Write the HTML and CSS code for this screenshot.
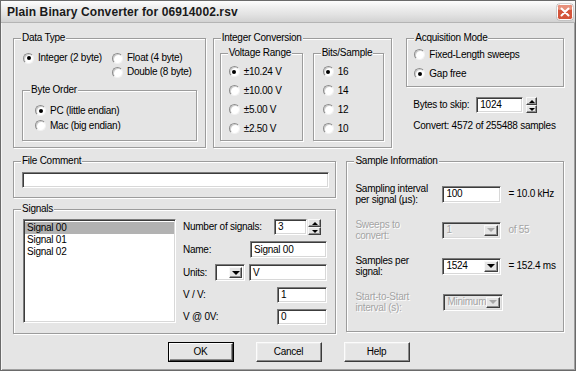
FILE: index.html
```html
<!DOCTYPE html>
<html>
<head>
<meta charset="utf-8">
<link rel="stylesheet" href="styles.css">
</head>
<body>
<div class="window">
  <div class="titlebar">
    <span class="title">Plain Binary Converter for 06914002.rsv</span>
    <svg class="close" width="18" height="18" viewBox="0 0 18 18">
      <rect x="0.5" y="0.5" width="17" height="17" rx="3" fill="#b0b0b0"/>
      <rect x="1.5" y="1.5" width="15" height="15" rx="2" fill="#d4553b" stroke="#ffffff" stroke-width="1"/>
      <rect x="2" y="2" width="14" height="5" rx="1.5" fill="#e8917c"/>
      <path d="M5.5 5.5 L12.5 12.5 M12.5 5.5 L5.5 12.5" stroke="#ffffff" stroke-width="2" stroke-linecap="round"/>
    </svg>
  </div>
  <div class="client">
    <div class="top-row">
      <fieldset class="group g-datatype">
        <legend>Data Type</legend>
        <div class="dt-grid">
          <div class="radio"><span class="rb on"></span>Integer (2 byte)</div>
          <div class="radio"><span class="rb"></span>Float (4 byte)</div>
          <div></div>
          <div class="radio"><span class="rb"></span>Double (8 byte)</div>
        </div>
        <fieldset class="group g-byteorder">
          <legend>Byte Order</legend>
          <div class="bo-list">
            <div class="radio"><span class="rb on"></span>PC (little endian)</div>
            <div class="radio"><span class="rb"></span>Mac (big endian)</div>
          </div>
        </fieldset>
      </fieldset>

      <fieldset class="group g-intconv">
        <legend>Integer Conversion</legend>
        <div class="ic-row">
          <fieldset class="group g-volt">
            <legend>Voltage Range</legend>
            <div class="volt-list">
              <div class="radio"><span class="rb on"></span>±10.24 V</div>
              <div class="radio"><span class="rb"></span>±10.00 V</div>
              <div class="radio"><span class="rb"></span>±5.00 V</div>
              <div class="radio"><span class="rb"></span>±2.50 V</div>
            </div>
          </fieldset>
          <fieldset class="group g-bits">
            <legend>Bits/Sample</legend>
            <div class="bits-list">
              <div class="radio"><span class="rb on"></span>16</div>
              <div class="radio"><span class="rb"></span>14</div>
              <div class="radio"><span class="rb"></span>12</div>
              <div class="radio"><span class="rb"></span>10</div>
            </div>
          </fieldset>
        </div>
      </fieldset>

      <div class="right-col">
        <fieldset class="group g-acq">
          <legend>Acquisition Mode</legend>
          <div class="acq-list">
            <div class="radio"><span class="rb"></span>Fixed-Length sweeps</div>
            <div class="radio"><span class="rb on"></span>Gap free</div>
          </div>
        </fieldset>
        <div class="skip-row">
          <span class="skip-label">Bytes to skip:</span>
          <span class="field skip-input">1024</span>
          <span class="spin"><span class="spin-btn"><span class="tri-up"></span></span><span class="spin-btn"><span class="tri-down"></span></span></span>
        </div>
        <div class="convert">Convert: 4572 of 255488 samples</div>
      </div>
    </div>

    <div class="mid-row">
      <div class="left-col">
        <fieldset class="group g-comment">
          <legend>File Comment</legend>
          <div class="field comment-input"></div>
        </fieldset>
        <fieldset class="group g-signals">
          <legend>Signals</legend>
          <div class="sig-body">
            <div class="listbox">
              <div class="lb-item sel">Signal 00</div>
              <div class="lb-item">Signal 01</div>
              <div class="lb-item">Signal 02</div>
            </div>
            <div class="sig-form">
              <div class="frow">
                <span class="flabel w91">Number of signals:</span>
                <span class="field w33">3</span>
                <span class="spin spin-sig"><span class="spin-btn"><span class="tri-up"></span></span><span class="spin-btn"><span class="tri-down"></span></span></span>
              </div>
              <div class="frow">
                <span class="flabel w67">Name:</span>
                <span class="field w77">Signal 00</span>
              </div>
              <div class="frow">
                <span class="flabel w32">Units:</span>
                <span class="field combo w30"><span class="combo-text"></span><span class="combo-btn"><span class="tri-down big"></span></span></span>
                <span class="field w78 units-input">V</span>
              </div>
              <div class="frow">
                <span class="flabel w94">V / V:</span>
                <span class="field w50">1</span>
              </div>
              <div class="frow">
                <span class="flabel w94">V @ 0V:</span>
                <span class="field w50">0</span>
              </div>
            </div>
          </div>
        </fieldset>
      </div>

      <fieldset class="group g-sample">
        <legend>Sample Information</legend>
        <div class="si-grid">
          <span class="si-label">Sampling interval<br>per signal (µs):</span>
          <span class="field si-field">100</span>
          <span class="si-after">= 10.0 kHz</span>

          <span class="si-label disabled">Sweeps to<br>convert:</span>
          <span class="field combo si-field dis"><span class="combo-text">1</span><span class="combo-btn"><span class="tri-down big"></span></span></span>
          <span class="si-after disabled">of 55</span>

          <span class="si-label">Samples per<br>signal:</span>
          <span class="field combo si-field"><span class="combo-text">1524</span><span class="combo-btn"><span class="tri-down big"></span></span></span>
          <span class="si-after">= 152.4 ms</span>

          <span class="si-label disabled">Start-to-Start<br>interval (s):</span>
          <span class="field combo si-field dis wide"><span class="combo-text">Minimum</span><span class="combo-btn"><span class="tri-down big"></span></span></span>
          <span></span>
        </div>
      </fieldset>
    </div>

    <div class="btn-row">
      <span class="btn default"><span class="btn-in">OK</span></span>
      <span class="btn"><span class="btn-in">Cancel</span></span>
      <span class="btn"><span class="btn-in">Help</span></span>
    </div>
  </div>
</div>
</body>
</html>
```

FILE: styles.css
```css
* { box-sizing: border-box; }
html, body { margin: 0; padding: 0; }
body {
  font: 10px/12px "Liberation Sans", Arial, sans-serif;
  letter-spacing: -0.25px;
  color: #000;
  background: #e5e5e5;
}

.window {
  width: 576px;
  height: 371px;
  border: 1px solid #6a6a6a;
  padding: 0 2px 2px;
  background: #e5e5e5;
  display: flex;
  flex-direction: column;
  box-shadow: inset 1px 0 0 #f4f4f4, inset -1px -1px 0 #a0a0a0;
}

.titlebar {
  height: 22px;
  margin: 0 -2px;
  padding: 0 1px 0 6px;
  display: flex;
  align-items: center;
  justify-content: space-between;
  background: linear-gradient(to bottom, #fdfdfd 0%, #efefef 30%, #e2e2e2 65%, #d2d2d2 100%);
  border-bottom: 1px solid #b4b4b4;
  flex: none;
}
.title {
  font: bold 12px/14px "Liberation Sans", Arial, sans-serif;
  letter-spacing: 0.1px;
  color: #1a1a1a;
}
.close { display: block; flex: none; }

.client {
  flex: 1;
  padding: 9px 9px 0 10px;
}

/* group boxes */
.group {
  margin: 0;
  padding: 0;
  min-width: 0;
  border: 1px solid #9c9c9c;
  box-shadow: inset 1px 1px 0 #fff, 1px 1px 0 #fff;
}
.group > legend {
  padding: 0 1px;
  margin-left: 7px;
  line-height: 12px;
  background: #e5e5e5;
}

.radio {
  display: flex;
  align-items: center;
  white-space: nowrap;
}
.rb {
  width: 11px;
  height: 11px;
  border-radius: 50%;
  margin-right: 4px;
  background: #fff;
  border: 1px solid;
  border-color: #8c8c8c #f2f2f2 #f2f2f2 #8c8c8c;
  box-shadow: inset 1px 1px 0 #cfcfcf;
  display: flex;
  align-items: center;
  justify-content: center;
  flex: none;
}
.rb.on::after {
  content: "";
  width: 4px;
  height: 4px;
  border-radius: 50%;
  background: #000;
}

.top-row { display: flex; height: 116px; }
.g-datatype { width: 193px; height: 116px; }
.g-intconv { width: 180px; height: 116px; margin-left: 7px; }
.right-col { width: 158px; margin-left: 14px; }

.dt-grid {
  display: grid;
  grid-template-columns: 89px auto;
  grid-auto-rows: 14px;
  margin: 7px 0 0 9px;
}
.g-byteorder { margin: 5px 0 0 8px; width: 175px; height: 57px; }
.bo-list { padding: 7px 0 0 12px; }
.bo-list .radio { height: 15px; }

.ic-row { display: flex; margin: 3px 0 0 6px; }
.g-volt { width: 83px; height: 94px; }
.g-bits { width: 71px; height: 94px; margin-left: 10px; }
.volt-list { padding: 3px 0 0 8px; }
.bits-list { padding: 3px 0 0 9px; }
.volt-list .radio, .bits-list .radio { height: 19px; }

.g-acq { height: 55px; }
.acq-list { padding: 1px 0 0 7px; }
.acq-list .radio { height: 19px; }

.skip-row {
  display: flex;
  align-items: center;
  height: 16px;
  margin: 10px 0 0 7px;
}
.skip-label { width: 63px; }
.skip-input { width: 47px; height: 16px; }
.spin { display: flex; flex-direction: column; width: 11px; height: 16px; margin-left: 3px; }
.spin-sig { width: 13px; margin-left: 1px; }
.spin-btn {
  flex: 1;
  display: flex;
  align-items: center;
  justify-content: center;
  background: #e5e5e5;
  border: 1px solid;
  border-color: #f8f8f8 #404040 #404040 #f8f8f8;
  box-shadow: inset -1px -1px 0 #909090;
}
.tri-up { width: 0; height: 0; border-style: solid; border-width: 0 3px 3px; border-color: transparent transparent #000; }
.tri-down { width: 0; height: 0; border-style: solid; border-width: 3px 3px 0; border-color: #000 transparent transparent; }
.tri-down.big { border-width: 4px 4px 0; }
.convert { margin: 7px 0 0 7px; white-space: nowrap; }

/* fields */
.field {
  display: flex;
  align-items: center;
  padding-left: 3px;
  background: #fff;
  border: 1px solid;
  border-color: #7c7c7c #fff #fff #7c7c7c;
  box-shadow: inset 1px 1px 0 #3c3c3c, inset -1px -1px 0 #d8d8d8;
  white-space: nowrap;
  overflow: hidden;
  flex: none;
}

.mid-row { display: flex; margin-top: 7px; height: 179px; }
.left-col { width: 324px; display: flex; flex-direction: column; }
.g-comment { height: 43px; }
.comment-input { margin: 5px 0 0 8px; width: 307px; height: 16px; }
.g-signals { margin-top: 5px; height: 131px; }
.sig-body { display: flex; padding: 4px 0 0 9px; }
.listbox {
  width: 153px;
  height: 104px;
  background: #fff;
  border: 1px solid;
  border-color: #7c7c7c #fff #fff #7c7c7c;
  box-shadow: inset 1px 1px 0 #3c3c3c, inset -1px -1px 0 #d8d8d8;
  padding: 2px 1px 0 1px;
}
.lb-item { height: 12px; line-height: 12px; padding-left: 2px; }
.lb-item.sel { background: #b2b2b2; }

.sig-form { margin-left: 7px; display: flex; flex-direction: column; gap: 6px; }
.frow { display: flex; align-items: center; height: 16px; }
.frow:nth-child(2), .frow:nth-child(3) { height: 17px; }
.frow .field { height: 100%; }
.flabel { flex: none; white-space: nowrap; }
.w91 { width: 91px; }
.w67 { width: 67px; }
.w32 { width: 32px; }
.w94 { width: 94px; }
.w33 { width: 33px; }
.w77 { width: 77px; }
.w30 { width: 30px; }
.w78 { width: 78px; }
.w50 { width: 50px; }
.units-input { margin-left: 4px; }

.combo { padding: 2px 2px 2px 3px; justify-content: space-between; }
.combo-text { flex: 1; }
.combo-btn {
  width: 14px;
  height: 100%;
  display: flex;
  align-items: center;
  justify-content: center;
  background: #e5e5e5;
  border: 1px solid;
  border-color: #f8f8f8 #404040 #404040 #f8f8f8;
  box-shadow: inset -1px -1px 0 #909090;
  flex: none;
}
.w30 .combo-btn { width: 13px; }
.combo.dis { background: #e5e5e5; color: #a4a4a4; text-shadow: 1px 1px 0 #fff; }
.combo.dis .tri-down { border-top-color: #a8a8a8; }

.g-sample { width: 218px; margin-left: 10px; height: 177px; }
.si-grid {
  display: grid;
  grid-template-columns: 80px 59px auto;
  grid-template-rows: repeat(4, 26px);
  row-gap: 10px;
  column-gap: 7px;
  align-items: center;
  padding: 14px 0 0 8px;
}
.si-label { line-height: 11px; white-space: nowrap; }
.si-field { height: 17px; }
.si-field.wide { width: 60px; margin-left: 1px; }
.si-after { white-space: nowrap; }
.disabled { color: #a4a4a4; text-shadow: 1px 1px 0 #fff; }

.btn-row {
  display: flex;
  justify-content: center;
  gap: 22px;
  margin-top: 8px;
}
.btn {
  width: 66px;
  height: 20px;
  border: 1px solid;
  border-color: #fcfcfc #3a3a3a #3a3a3a #fcfcfc;
  box-shadow: inset -1px -1px 0 #8a8a8a, inset 1px 1px 0 #ececec;
  background: #e5e5e5;
  display: flex;
}
.btn-in { flex: 1; display: flex; align-items: center; justify-content: center; }
.btn.default {
  border: 1px solid #000;
  box-shadow: none;
}
.btn.default .btn-in {
  border: 1px solid;
  border-color: #fcfcfc #3a3a3a #3a3a3a #fcfcfc;
  box-shadow: inset -1px -1px 0 #8a8a8a;
}
```
